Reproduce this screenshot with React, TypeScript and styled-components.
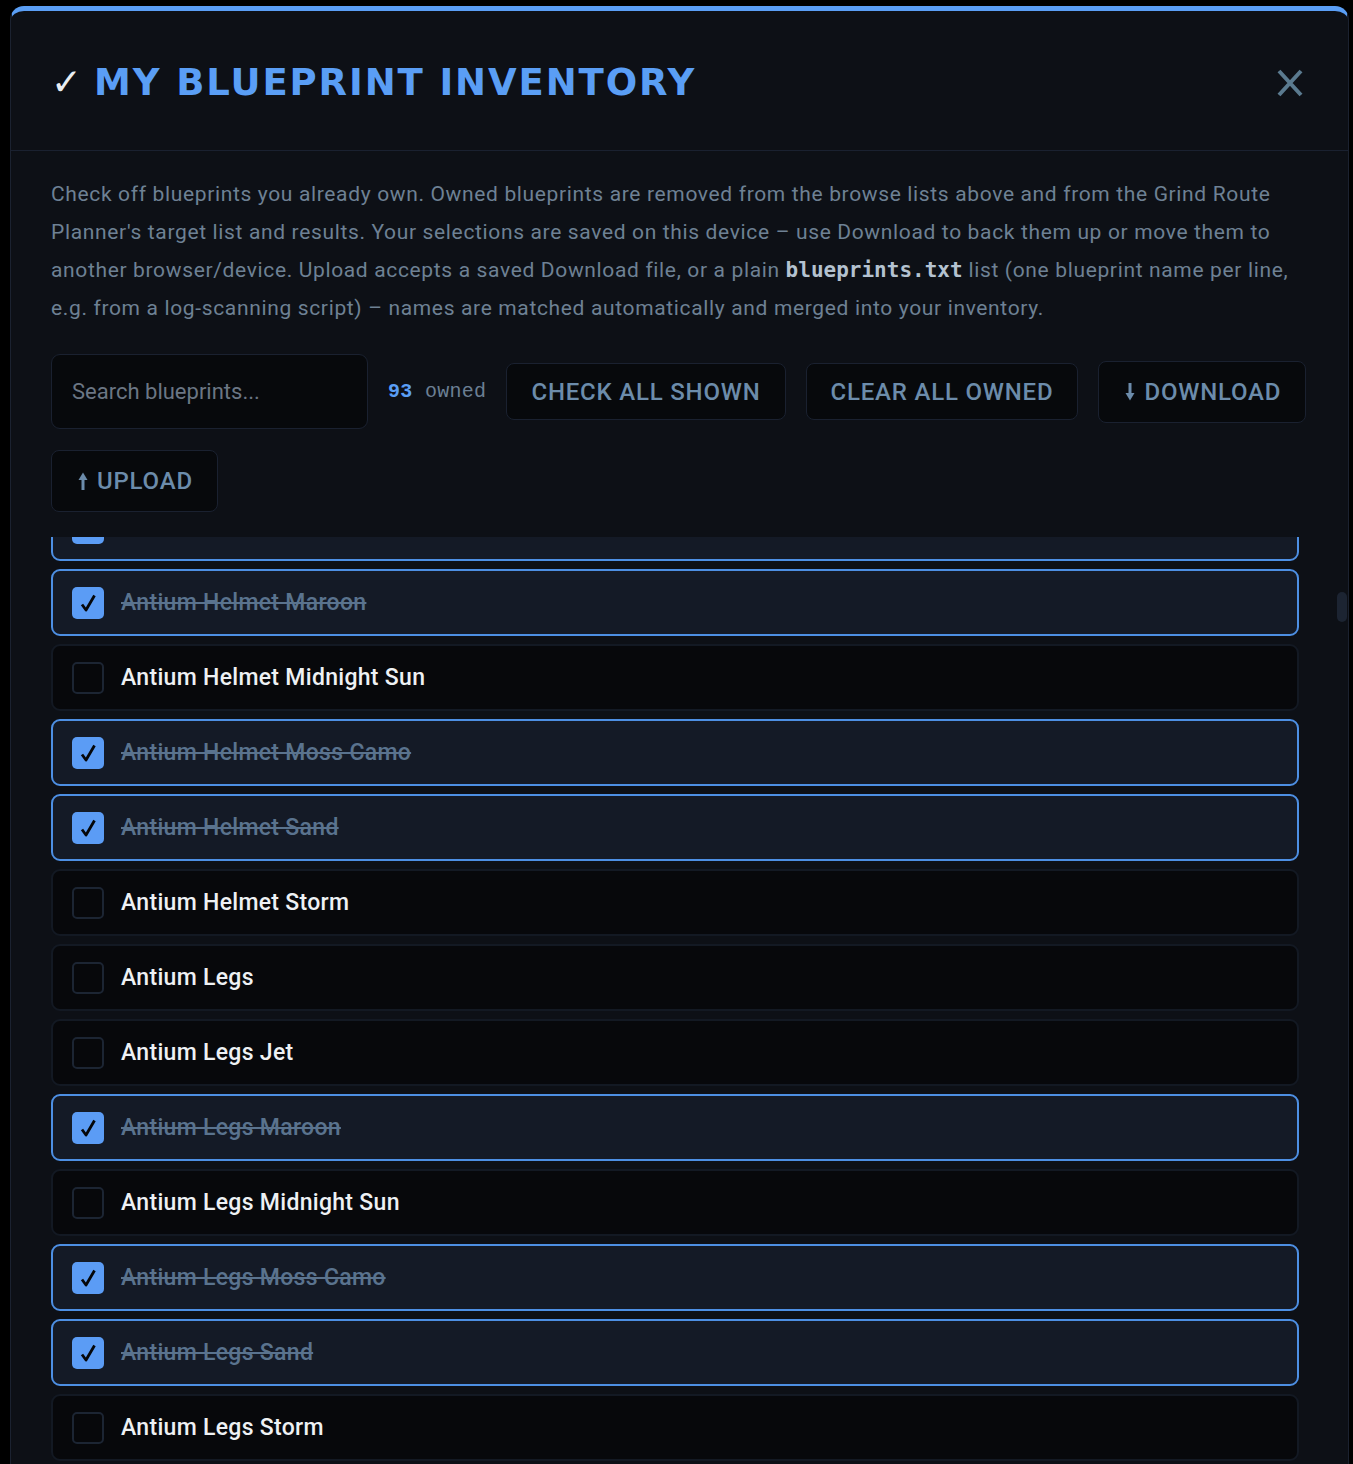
import React, { useLayoutEffect, useRef } from "react";
import styled, { createGlobalStyle } from "styled-components";

const GlobalStyle = createGlobalStyle`
  html, body {
    margin: 0;
    height: 100%;
    background: #000;
    overflow: hidden;
  }
  body {
    font-family: Roboto, "Liberation Sans", sans-serif;
  }
  #root {
    height: 100%;
  }
`;

const Modal = styled.section`
  box-sizing: border-box;
  height: calc(100vh - 6px);
  margin: 6px 4px 0 10px;
  display: flex;
  flex-direction: column;
  background: #0d1016;
  border: 1px solid #1b2230;
  border-top: 5px solid #5a9ef5;
  border-bottom: none;
  border-radius: 14px 14px 0 0;
  overflow: hidden;
`;

const Header = styled.header`
  flex: none;
  box-sizing: border-box;
  height: 140px;
  padding: 4px 44px 0 40px;
  display: flex;
  align-items: center;
  justify-content: space-between;
  border-bottom: 1px solid #1a2130;
`;

const Title = styled.h2`
  margin: 0;
  display: flex;
  align-items: center;
  gap: 12px;
  font-family: "DejaVu Sans", sans-serif;
  font-weight: 700;
  font-size: 37px;
  letter-spacing: 1.9px;
  color: #5a9ef5;
`;

const TitleMark = styled.span`
  color: #e9edf2;
  font-weight: 400;
  letter-spacing: 0;
`;

const CloseButton = styled.button`
  width: 28px;
  height: 28px;
  padding: 0;
  border: none;
  background: none;
  color: #5a7a8f;
  cursor: pointer;
  display: grid;
  place-items: center;
`;

const Intro = styled.div`
  flex: none;
  padding: 24px 38px 25px 40px;
`;

const Description = styled.p`
  margin: 0;
  font-size: 21px;
  line-height: 38px;
  letter-spacing: 0.65px;
  color: #6e8194;
`;

const Code = styled.code`
  font-family: "DejaVu Sans Mono", monospace;
  font-weight: 700;
  font-size: 21px;
  letter-spacing: 0;
  color: #b4c2d0;
`;

const Controls = styled.div`
  margin-top: 27px;
  display: flex;
  flex-wrap: wrap;
  align-items: center;
  gap: 21px 20px;
`;

const Search = styled.input`
  box-sizing: border-box;
  width: 317px;
  height: 75px;
  padding: 0 20px;
  background: #07090c;
  border: 1px solid #1a2130;
  border-radius: 9px;
  color: #e8ecf0;
  font: 400 22px Roboto, sans-serif;
  outline: none;

  &::placeholder {
    color: #6b7684;
  }
`;

const OwnedCount = styled.div`
  font-family: "Liberation Mono", "DejaVu Sans Mono", monospace;
  font-size: 20px;
  letter-spacing: 0.3px;
  color: #6b7f93;

  b {
    color: #5a9ef5;
    font-weight: 700;
  }
`;

const Button = styled.button<{ $tall?: boolean }>`
  box-sizing: border-box;
  height: ${(p) => (p.$tall ? 62 : 57)}px;
  padding: 0 24px 0 ${(p) => (p.$tall ? 26 : 24)}px;
  display: inline-flex;
  align-items: center;
  gap: 9px;
  background: #07090c;
  border: 1px solid #1a2130;
  border-radius: 8px;
  color: #6c8cab;
  font: 500 24px Roboto, sans-serif;
  letter-spacing: 0.8px;
  text-transform: uppercase;
  cursor: pointer;
`;

const ListArea = styled.div`
  position: relative;
  flex: 1;
  min-height: 0;
  display: flex;
`;

const List = styled.div`
  flex: 1;
  overflow-y: auto;
  scrollbar-width: none;
  padding: 0 49px 0 40px;
  display: grid;
  gap: 8px;
  align-content: start;

  &::-webkit-scrollbar {
    display: none;
  }
`;

/* scroll thumb drawn over the list's right gutter */
const Thumb = styled.div`
  position: absolute;
  top: 55px;
  right: 1px;
  width: 10px;
  height: 30px;
  border-radius: 5px;
  background: #1c2432;
`;

const Row = styled.div<{ $owned: boolean }>`
  box-sizing: border-box;
  height: 67px;
  padding: 0 19px;
  display: flex;
  align-items: center;
  gap: 17px;
  border: 2px solid ${(p) => (p.$owned ? "#4d8fe3" : "#131923")};
  border-radius: 9px;
  background: ${(p) => (p.$owned ? "#141a26" : "#07080b")};
  cursor: pointer;
`;

const Box = styled.span<{ $on: boolean }>`
  box-sizing: border-box;
  flex: none;
  width: 32px;
  height: 32px;
  display: grid;
  place-items: center;
  border-radius: 5px;
  background: ${(p) => (p.$on ? "#5b9cf5" : "transparent")};
  border: ${(p) => (p.$on ? "none" : "2px solid #1c2533")};
  color: #05070a;
`;

const Name = styled.span<{ $owned: boolean }>`
  font: 500 23px Roboto, sans-serif;
  letter-spacing: 0.3px;
  color: ${(p) => (p.$owned ? "#5a738e" : "#eef1f4")};
  text-decoration: ${(p) => (p.$owned ? "line-through" : "none")};
`;

const variants = ["", "Jet", "Maroon", "Midnight Sun", "Moss Camo", "Sand", "Storm"];
const ownedVariants = new Set(["Jet", "Maroon", "Moss Camo", "Sand"]);
const pieces = ["Arms", "Core", "Helmet", "Legs"];

const lead = [
  "ADP Arms",
  "ADP Core",
  "ADP Helmet",
  "ADP Legs",
  "Aegis Arms",
  "Aegis Core",
  "Aegis Helmet",
  "Aegis Legs",
];

const others = [
  "Arden", "Aril", "Artimex", "Aves", "Balor", "Calico", "Citadel", "Corbel",
  "Defiance", "DustUp", "Field Recon", "Geist", "Inquisitor", "Lynx", "Monde",
  "Morozov", "ORC", "Overlord", "Palatino", "Pembroke", "Piecemeal", "Strata",
  "Testudo", "Venture",
];
const shades = ["", "Black", "Red", "Sand"];

type Blueprint = { name: string; owned: boolean };

const blueprints: Blueprint[] = [
  ...lead.map((name, i) => ({ name, owned: i % 3 === 0 })),
  ...pieces.flatMap((piece) =>
    variants.map((v) => ({
      name: ["Antium", piece, v].filter(Boolean).join(" "),
      owned: ownedVariants.has(v) && !(piece === "Legs" && v === "Jet"),
    }))
  ),
  ...others
    .flatMap((line) =>
      pieces.flatMap((piece) =>
        shades.map((s, i) => ({
          name: [line, piece, s].filter(Boolean).join(" "),
          owned: (line.length + i) % 4 === 0,
        }))
      )
    )
    .slice(0, 364),
];

function CloseIcon() {
  return (
    <svg width="26" height="28" viewBox="0 0 26 28" fill="none">
      <path d="M2 2 L24 26 M24 2 L2 26" stroke="currentColor" strokeWidth="4" />
    </svg>
  );
}

function CheckIcon() {
  return (
    <svg width="18" height="18" viewBox="0 0 18 18" fill="none">
      <path
        d="M3 10.5 L7 16 L15.5 1.5"
        stroke="currentColor"
        strokeWidth="2.8"
        strokeLinejoin="round"
      />
    </svg>
  );
}

function ArrowIcon({ up }: { up?: boolean }) {
  return (
    <svg
      width="10"
      height="18"
      viewBox="0 0 10 18"
      fill="currentColor"
      style={up ? { transform: "rotate(180deg)" } : undefined}
    >
      <rect x="3.5" y="0" width="3" height="12" />
      <path d="M0.5 10 H9.5 L5 17.5 Z" />
    </svg>
  );
}

export default function App() {
  const listRef = useRef<HTMLDivElement>(null);

  useLayoutEffect(() => {
    if (listRef.current) listRef.current.scrollTop = 1768;
  }, []);

  return (
    <>
      <GlobalStyle />
      <Modal>
        <Header>
          <Title>
            <TitleMark>✓</TitleMark>
            MY BLUEPRINT INVENTORY
          </Title>
          <CloseButton aria-label="Close">
            <CloseIcon />
          </CloseButton>
        </Header>

        <Intro>
          <Description>
            Check off blueprints you already own. Owned blueprints are removed from the browse
            lists above and from the Grind Route
            <br />
            Planner's target list and results. Your selections are saved on this device – use
            Download to back them up or move them to
            <br />
            another browser/device. Upload accepts a saved Download file, or a plain{" "}
            <Code>blueprints.txt</Code> list (one blueprint name per line,
            <br />
            e.g. from a log-scanning script) – names are matched automatically and merged into
            your inventory.
          </Description>

          <Controls>
            <Search placeholder="Search blueprints..." />
            <OwnedCount>
              <b>93</b> owned
            </OwnedCount>
            <Button>Check all shown</Button>
            <Button>Clear all owned</Button>
            <Button $tall>
              <ArrowIcon />
              Download
            </Button>
            <Button $tall>
              <ArrowIcon up />
              Upload
            </Button>
          </Controls>
        </Intro>

        <ListArea>
          <List ref={listRef}>
            {blueprints.map((bp) => (
              <Row key={bp.name} $owned={bp.owned}>
                <Box $on={bp.owned}>{bp.owned ? <CheckIcon /> : null}</Box>
                <Name $owned={bp.owned}>{bp.name}</Name>
              </Row>
            ))}
          </List>
          <Thumb />
        </ListArea>
      </Modal>
    </>
  );
}
